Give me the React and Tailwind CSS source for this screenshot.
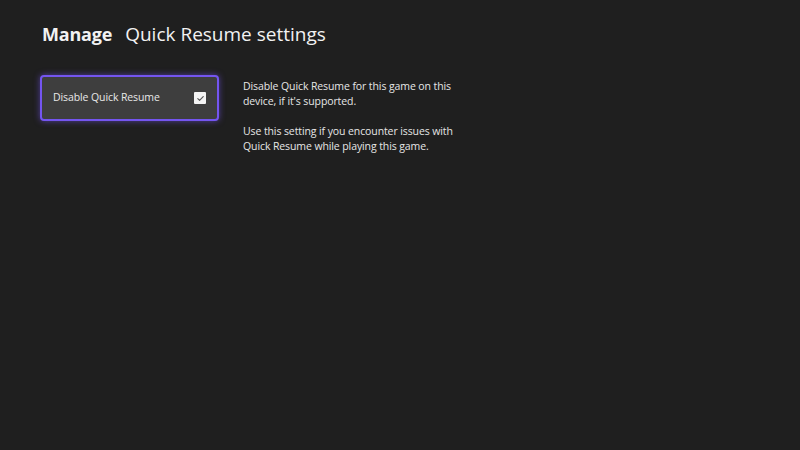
export default function App() {
  return (
    <div
      className="w-[800px] h-[450px] bg-[#1f1f1f] text-white overflow-hidden"
      style={{ fontFamily: '"Open Sans", "Noto Sans", sans-serif' }}
    >
      <div className="pl-[40px] pt-[20px]">
        <h1 className="flex items-baseline gap-[13px] pl-[2px] leading-[28px] text-[#f2f2f2]">
          <span className="font-bold text-[18px] tracking-[-0.2px]">Manage</span>
          <span className="font-medium text-[19px]">Quick Resume settings</span>
        </h1>

        <div className="flex mt-[27px]">
          <button className="flex items-center justify-between w-[179px] h-[46px] pl-[11px] pr-[11px] bg-[#3e3e3e] border-[2.5px] border-[#7455f0] rounded-[4px] shadow-[0_0_6px_rgba(116,85,240,0.6)]">
            <span className="text-[10.5px] tracking-[-0.1px] text-[#e8e8e8]">Disable Quick Resume</span>
            <span className="w-[12px] h-[12px] bg-[#f4f4f4] flex items-center justify-center rounded-[1px]">
              <svg width="9" height="9" viewBox="0 0 10 10" fill="none" stroke="#555" strokeWidth="1.2" strokeLinecap="round" strokeLinejoin="round">
                <path d="M2 5.2l2 2 4-4.4" />
              </svg>
            </span>
          </button>

          <div className="ml-[24px] mt-[4px] text-[10.5px] leading-[15px] tracking-[-0.1px] text-[#e6e6e6] w-[240px]">
            <p>Disable Quick Resume for this game on this<br />device, if it's supported.</p>
            <p className="mt-[15px]">Use this setting if you encounter issues with<br />Quick Resume while playing this game.</p>
          </div>
        </div>
      </div>
    </div>
  )
}
